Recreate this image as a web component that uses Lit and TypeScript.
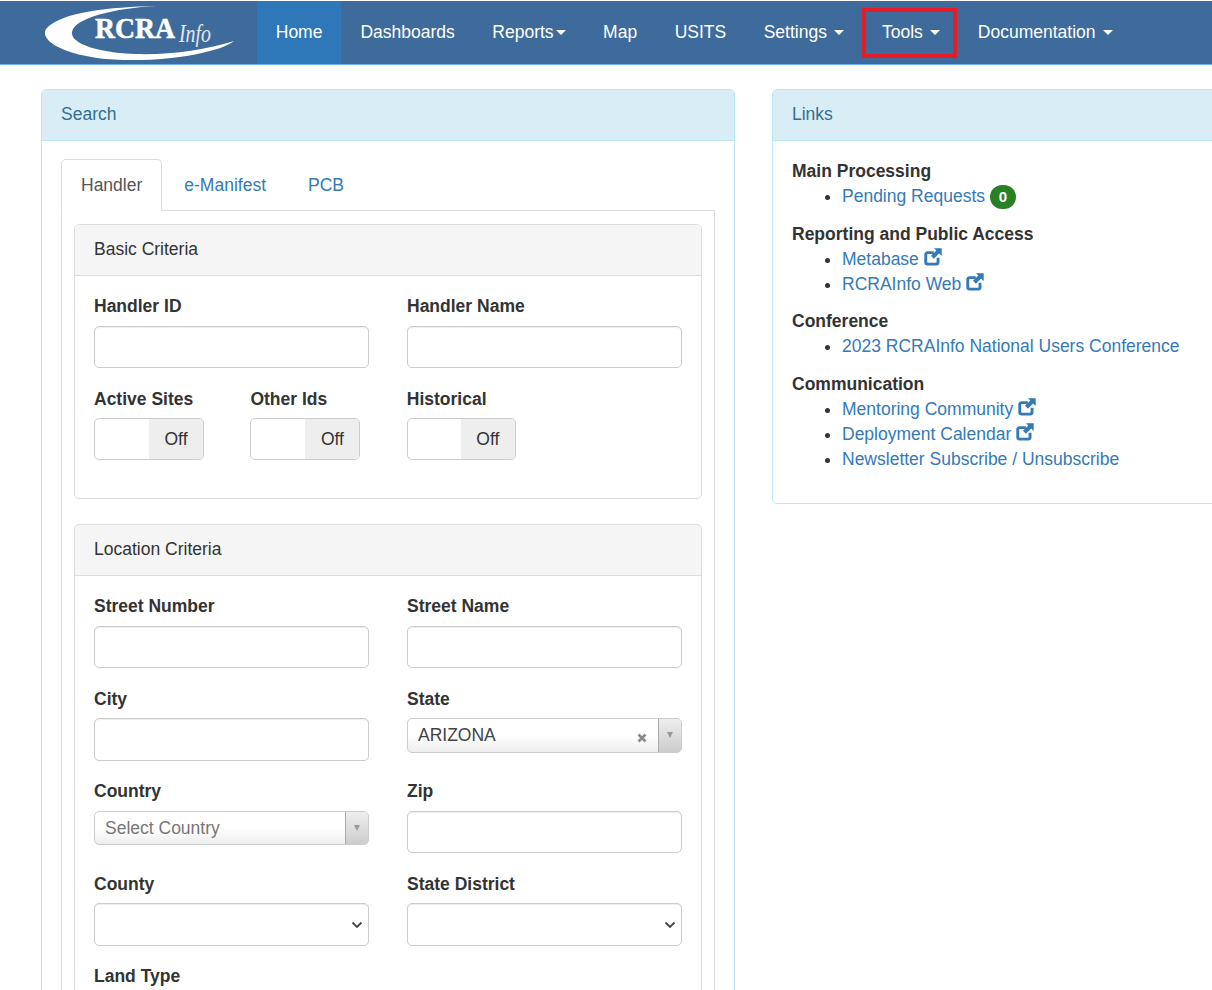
import { LitElement, html, css, svg } from 'lit'
import { customElement } from 'lit/decorators.js'

const navItems = [
  { label: 'Home', active: true },
  { label: 'Dashboards' },
  { label: 'Reports', caret: 'tight' },
  { label: 'Map' },
  { label: 'USITS' },
  { label: 'Settings', caret: 'wide' },
  { label: 'Tools', caret: 'wide', marked: true },
  { label: 'Documentation', caret: 'wide' },
]

const externalIcon = svg`
  <path d="M3.4 3.2h6.4v2.9H4.2c-.6 0-1 .4-1 1v6.6c0 .6.4 1 1 1h7.4c.6 0 1-.4 1-1V9.8h2.9v4.6c0 1.7-1.4 3.1-3.1 3.1H3.4c-1.7 0-3.1-1.4-3.1-3.1V6.3c0-1.7 1.4-3.1 3.1-3.1z" fill="currentColor"/>
  <path d="M10 .3h7.7V8l-2.6-2.6-5.2 5.3-2.9-2.9 5.3-5.2z" fill="currentColor"/>
`

@customElement('app-root')
export class AppRoot extends LitElement {
  static styles = css`
    :host {
      display: block;
      width: 1212px;
      height: 990px;
      overflow: hidden;
      background: #fff;
      font-family: 'Liberation Sans', Arial, sans-serif;
      font-size: 17.5px;
      line-height: 25px;
      color: #333;
    }

    * {
      box-sizing: border-box;
    }

    .navbar {
      display: flex;
      height: 64px;
      margin-top: 1px;
      background: #3e6b9b;
      border-bottom: 1px solid #6cb2eb;
    }

    .logo {
      width: 257px;
      height: 63px;
      flex: none;
    }

    .logo text {
      fill: #fff;
    }

    .nav-item {
      display: flex;
      align-items: center;
      height: 63px;
      padding: 0 18.75px;
      color: #fff;
      white-space: nowrap;
    }

    .nav-item.active {
      margin-right: 0.5px;
      background: #2e78b9;
    }

    .nav-item.marked {
      position: relative;
    }

    .nav-item.marked::after {
      content: '';
      box-sizing: border-box;
      position: absolute;
      left: -1px;
      top: 7px;
      width: 95px;
      height: 50px;
      border: 4px solid #e51c23;
    }

    .caret {
      display: inline-block;
      width: 0;
      height: 0;
      border-top: 5px solid #fff;
      border-left: 5px solid transparent;
      border-right: 5px solid transparent;
    }

    .caret.wide {
      margin-left: 7.5px;
    }

    .caret.tight {
      margin-left: 2px;
    }

    .page {
      display: grid;
      grid-template-columns: 694px 694px;
      gap: 37px;
      padding: 24px 0 0 41px;
    }

    .panel {
      border: 1px solid #bce8f1;
      border-radius: 5px;
      align-self: start;
    }

    .panel-heading {
      height: 51px;
      padding: 12px 19px;
      background: #d9edf7;
      color: #31708f;
      border-bottom: 1px solid #bce8f1;
      border-radius: 4px 4px 0 0;
    }

    .search-body {
      padding: 18px 19px;
    }

    .tabs {
      display: flex;
      height: 52px;
      border-bottom: 1px solid #ddd;
    }

    .tab {
      height: 52px;
      margin-right: 2px;
      padding: 13px 19px;
      color: #337ab7;
      border: 1px solid transparent;
    }

    .tab.active {
      color: #555;
      background: #fff;
      border-color: #ddd #ddd #fff;
      border-radius: 5px 5px 0 0;
    }

    .tab-content {
      padding: 13px 12px 0;
      border-left: 1px solid #ddd;
      border-right: 1px solid #ddd;
    }

    .sub-panel {
      border: 1px solid #ddd;
      border-radius: 5px;
      margin-bottom: 25px;
    }

    .sub-heading {
      height: 51px;
      padding: 12px 19px;
      background: #f5f5f5;
      border-bottom: 1px solid #ddd;
      border-radius: 4px 4px 0 0;
    }

    .sub-body {
      padding: 18.25px 19px 0;
    }

    .fields {
      display: grid;
      grid-template-columns: 275px 275px;
      column-gap: 38px;
    }

    .field {
      height: 92.5px;
    }

    label {
      display: block;
      height: 31.5px;
      font-weight: 700;
    }

    .input {
      display: block;
      width: 100%;
      height: 42.5px;
      background: #fff;
      border: 1px solid #ccc;
      border-radius: 5px;
      box-shadow: inset 0 1px 1px rgba(0, 0, 0, 0.075);
    }

    .select {
      position: relative;
    }

    .select svg {
      position: absolute;
      right: 4px;
      top: 16px;
    }

    .switches {
      display: grid;
      grid-template-columns: 110px 110px 109px;
      column-gap: 46.4px;
      height: 111px;
    }

    .switch {
      display: flex;
      width: 100%;
      height: 42px;
      border: 1px solid #ccc;
      border-radius: 5px;
      overflow: hidden;
    }

    .switch-blank {
      flex: 1;
    }

    .switch-off {
      width: 54px;
      text-align: center;
      line-height: 40px;
      background: #eee;
    }

    .chosen {
      display: flex;
      width: 100%;
      height: 34.5px;
      border: 1px solid #ccc;
      border-radius: 5px;
      overflow: hidden;
      background: linear-gradient(#fff 50%, #eee);
    }

    .chosen-value {
      flex: 1;
      padding-left: 10px;
      line-height: 32px;
      color: #444;
      position: relative;
    }

    .chosen-value.placeholder {
      color: #777;
    }

    .chosen-clear {
      position: absolute;
      right: 11px;
      top: 14px;
    }

    .chosen-arrow {
      display: flex;
      align-items: center;
      justify-content: center;
      width: 23px;
      border-left: 1px solid #aaa;
      background: linear-gradient(#eee, #ccc);
    }

    .chosen-arrow i {
      display: block;
      width: 0;
      height: 0;
      border-top: 6px solid #999;
      border-left: 3.5px solid transparent;
      border-right: 3.5px solid transparent;
    }

    .links-body {
      padding: 18px 19px 32px;
      height: 361.5px;
    }

    .group {
      margin-bottom: 12.5px;
    }

    .group:nth-child(1) {
      margin-bottom: 13.25px;
    }

    .group:nth-child(2) {
      margin-bottom: 11.75px;
    }

    .group h4 {
      margin: 0;
      font-size: 17.5px;
      font-weight: 700;
      line-height: 25px;
    }

    ul {
      margin: 0;
      padding-left: 50px;
    }

    li {
      color: #333;
    }

    a {
      color: #337ab7;
      text-decoration: none;
    }

    .badge {
      display: inline-block;
      min-width: 26px;
      height: 24px;
      margin: -4px 0;
      padding: 0 8px;
      border-radius: 12px;
      background: #2a8125;
      color: #fff;
      font-size: 15px;
      font-weight: 700;
      line-height: 24px;
      text-align: center;
      vertical-align: middle;
    }

    .ext {
      display: inline-block;
      width: 18px;
      height: 18px;
      margin: -2px 0 -2px 0;
      color: #337ab7;
      vertical-align: 1px;
    }
  `

  private renderLogo() {
    return html`
      <svg class="logo" viewBox="0 0 257 63" aria-label="RCRAInfo">
        <path d="M157 5C110 6 60 11 46 28C38 43 78 59 128 59C172 60 220 51 234 40C205 49 170 54 136 53C100 52 70 43 72 31C74 17 115 7 157 5Z" fill="#fff"/>
        <text x="95" y="37" font-family="'Liberation Serif', serif" font-size="30" font-weight="700" stroke="#fff" stroke-width="0.6" textLength="80" lengthAdjust="spacingAndGlyphs">RCRA</text>
        <text x="179" y="41" font-family="'Liberation Serif', serif" font-size="26" font-style="italic" opacity="0.85" textLength="32" lengthAdjust="spacingAndGlyphs">Info</text>
      </svg>
    `
  }

  private renderInput(name: string) {
    return html`<div class="field"><label>${name}</label><div class="input"></div></div>`
  }

  private renderSelect(name: string) {
    return html`
      <div class="field">
        <label>${name}</label>
        <div class="input select">
          <svg width="14" height="10" viewBox="0 0 14 10"><path d="M2.5 2.5l4.5 4.5 4.5-4.5" fill="none" stroke="#444" stroke-width="1.8"/></svg>
        </div>
      </div>
    `
  }

  private renderChosen(name: string, value: string, clearable: boolean) {
    return html`
      <div class="field">
        <label>${name}</label>
        <div class="chosen">
          <div class="chosen-value ${clearable ? '' : 'placeholder'}">
            ${value}
            ${clearable
              ? html`<svg class="chosen-clear" width="10" height="10" viewBox="0 0 10 10"><path d="M1.5 1.5l7 7M8.5 1.5l-7 7" stroke="#888" stroke-width="2.6"/></svg>`
              : ''}
          </div>
          <div class="chosen-arrow"><i></i></div>
        </div>
      </div>
    `
  }

  private renderSwitch(name: string) {
    return html`
      <div>
        <label>${name}</label>
        <div class="switch"><div class="switch-blank"></div><div class="switch-off">Off</div></div>
      </div>
    `
  }

  private ext() {
    return html`<svg class="ext" viewBox="0 0 18 18">${externalIcon}</svg>`
  }

  render() {
    return html`
      <nav class="navbar">
        ${this.renderLogo()}
        ${navItems.map(item => html`
          <div class="nav-item ${item.active ? 'active' : ''} ${item.marked ? 'marked' : ''}">
            ${item.label}${item.caret ? html`<span class="caret ${item.caret}"></span>` : ''}
          </div>
        `)}
      </nav>
      <div class="page">
        <section class="panel">
          <div class="panel-heading">Search</div>
          <div class="search-body">
            <div class="tabs">
              <div class="tab active">Handler</div>
              <div class="tab">e-Manifest</div>
              <div class="tab">PCB</div>
            </div>
            <div class="tab-content">
              <div class="sub-panel">
                <div class="sub-heading">Basic Criteria</div>
                <div class="sub-body">
                  <div class="fields">
                    ${this.renderInput('Handler ID')}
                    ${this.renderInput('Handler Name')}
                  </div>
                  <div class="switches">
                    ${this.renderSwitch('Active Sites')}
                    ${this.renderSwitch('Other Ids')}
                    ${this.renderSwitch('Historical')}
                  </div>
                </div>
              </div>
              <div class="sub-panel">
                <div class="sub-heading">Location Criteria</div>
                <div class="sub-body">
                  <div class="fields">
                    ${this.renderInput('Street Number')}
                    ${this.renderInput('Street Name')}
                    ${this.renderInput('City')}
                    ${this.renderChosen('State', 'ARIZONA', true)}
                    ${this.renderChosen('Country', 'Select Country', false)}
                    ${this.renderInput('Zip')}
                    ${this.renderSelect('County')}
                    ${this.renderSelect('State District')}
                    ${this.renderInput('Land Type')}
                  </div>
                </div>
              </div>
            </div>
          </div>
        </section>
        <section class="panel">
          <div class="panel-heading">Links</div>
          <div class="links-body">
            <div class="group">
              <h4>Main Processing</h4>
              <ul><li><a>Pending Requests</a> <span class="badge">0</span></li></ul>
            </div>
            <div class="group">
              <h4>Reporting and Public Access</h4>
              <ul>
                <li><a>Metabase</a> ${this.ext()}</li>
                <li><a>RCRAInfo Web</a> ${this.ext()}</li>
              </ul>
            </div>
            <div class="group">
              <h4>Conference</h4>
              <ul><li><a>2023 RCRAInfo National Users Conference</a></li></ul>
            </div>
            <div class="group">
              <h4>Communication</h4>
              <ul>
                <li><a>Mentoring Community</a> ${this.ext()}</li>
                <li><a>Deployment Calendar</a> ${this.ext()}</li>
                <li><a>Newsletter Subscribe / Unsubscribe</a></li>
              </ul>
            </div>
          </div>
        </section>
      </div>
    `
  }
}
